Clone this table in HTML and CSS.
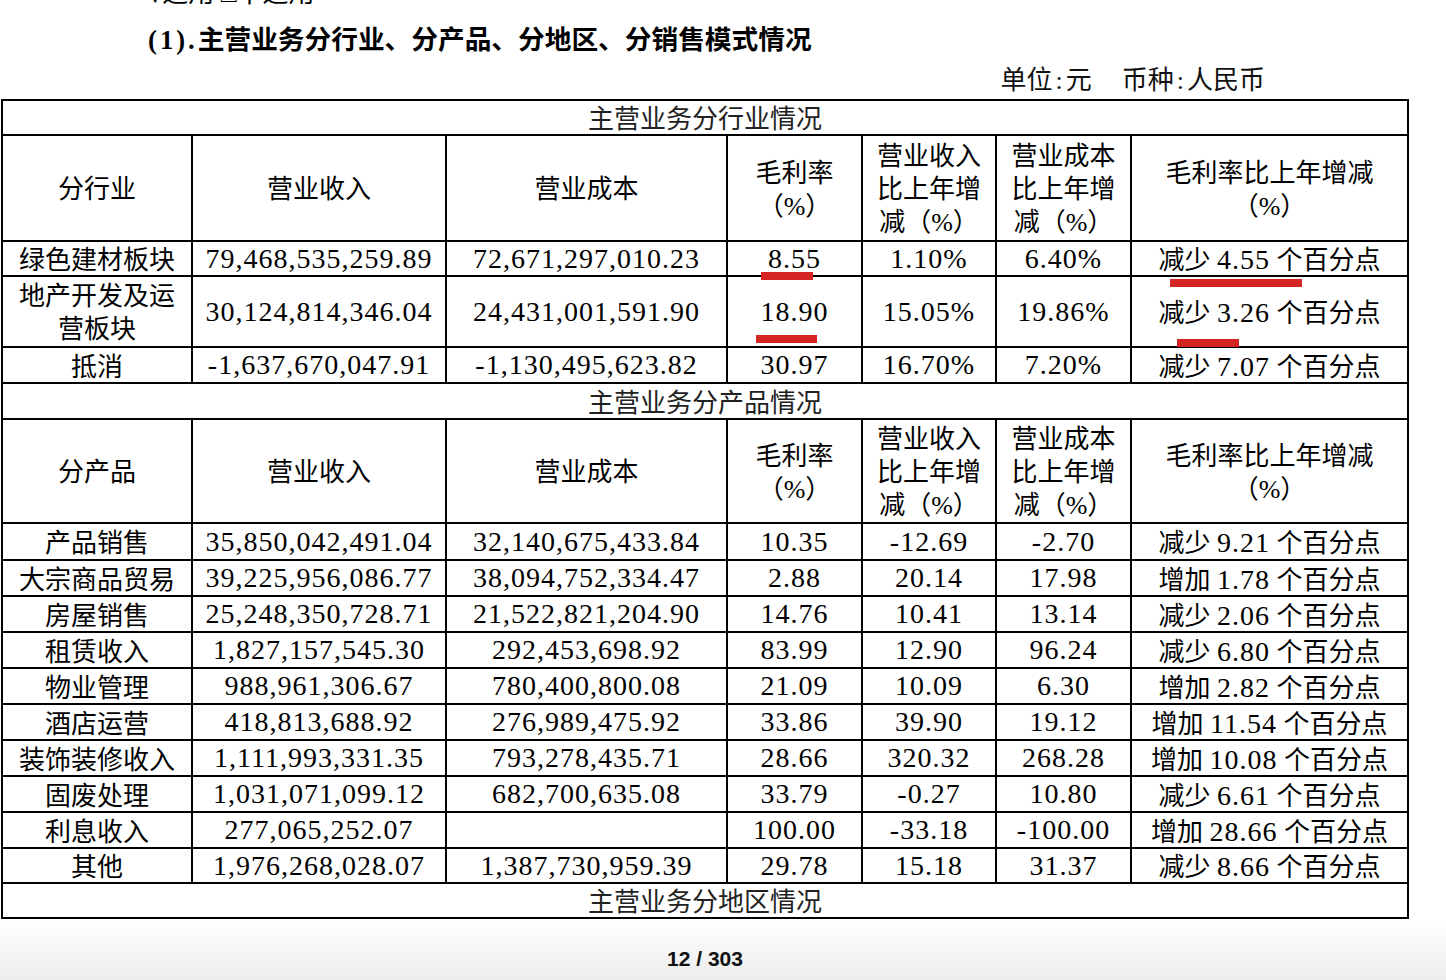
FILE: index.html
```html
<!DOCTYPE html>
<html lang="zh-CN">
<head>
<meta charset="utf-8">
<title>主营业务分行业、分产品、分地区、分销售模式情况</title>
<link rel="stylesheet" href="styles.css">
</head>
<body>
<div class="page">
  <div class="check">√适用 □不适用</div>
  <div class="heading"><span class="hnum">(1).</span>主营业务分行业、分产品、分地区、分销售模式情况</div>
  <div class="unit"><span>单位<span class="colon">:</span>元</span><span class="unit-gap">币种<span class="colon">:</span>人民币</span></div>

  <table class="tbl">
    <colgroup>
      <col class="c1"><col class="c2"><col class="c3"><col class="c4"><col class="c5"><col class="c6"><col class="c7">
    </colgroup>
    <tr class="r-35"><td colspan="7" class="title">主营业务分行业情况</td></tr>
    <tr class="r-h106 head">
      <td>分行业</td><td>营业收入</td><td>营业成本</td>
      <td>毛利率<br>（%）</td>
      <td>营业收入<br>比上年增<br>减（%）</td>
      <td>营业成本<br>比上年增<br>减（%）</td>
      <td>毛利率比上年增减<br>（%）</td>
    </tr>
    <tr class="r-35">
      <td>绿色建材板块</td><td class="num">79,468,535,259.89</td><td class="num">72,671,297,010.23</td>
      <td class="num">8.55</td><td class="num">1.10%</td><td class="num">6.40%</td>
      <td>减少 <span class="num">4.55</span> 个百分点</td>
    </tr>
    <tr class="r-71 head">
      <td>地产开发及运<br>营板块</td><td class="num">30,124,814,346.04</td><td class="num">24,431,001,591.90</td>
      <td class="num">18.90</td><td class="num">15.05%</td><td class="num">19.86%</td>
      <td>减少 <span class="num">3.26</span> 个百分点</td>
    </tr>
    <tr class="r-36">
      <td>抵消</td><td class="num">-1,637,670,047.91</td><td class="num">-1,130,495,623.82</td>
      <td class="num">30.97</td><td class="num">16.70%</td><td class="num">7.20%</td>
      <td>减少 <span class="num">7.07</span> 个百分点</td>
    </tr>
    <tr class="r-36"><td colspan="7" class="title">主营业务分产品情况</td></tr>
    <tr class="r-h104 head">
      <td>分产品</td><td>营业收入</td><td>营业成本</td>
      <td>毛利率<br>（%）</td>
      <td>营业收入<br>比上年增<br>减（%）</td>
      <td>营业成本<br>比上年增<br>减（%）</td>
      <td>毛利率比上年增减<br>（%）</td>
    </tr>
    <tr class="r-37">
      <td>产品销售</td><td class="num">35,850,042,491.04</td><td class="num">32,140,675,433.84</td>
      <td class="num">10.35</td><td class="num">-12.69</td><td class="num">-2.70</td>
      <td>减少 <span class="num">9.21</span> 个百分点</td>
    </tr>
    <tr class="r-36">
      <td>大宗商品贸易</td><td class="num">39,225,956,086.77</td><td class="num">38,094,752,334.47</td>
      <td class="num">2.88</td><td class="num">20.14</td><td class="num">17.98</td>
      <td>增加 <span class="num">1.78</span> 个百分点</td>
    </tr>
    <tr class="r-36">
      <td>房屋销售</td><td class="num">25,248,350,728.71</td><td class="num">21,522,821,204.90</td>
      <td class="num">14.76</td><td class="num">10.41</td><td class="num">13.14</td>
      <td>减少 <span class="num">2.06</span> 个百分点</td>
    </tr>
    <tr class="r-36">
      <td>租赁收入</td><td class="num">1,827,157,545.30</td><td class="num">292,453,698.92</td>
      <td class="num">83.99</td><td class="num">12.90</td><td class="num">96.24</td>
      <td>减少 <span class="num">6.80</span> 个百分点</td>
    </tr>
    <tr class="r-36">
      <td>物业管理</td><td class="num">988,961,306.67</td><td class="num">780,400,800.08</td>
      <td class="num">21.09</td><td class="num">10.09</td><td class="num">6.30</td>
      <td>增加 <span class="num">2.82</span> 个百分点</td>
    </tr>
    <tr class="r-36">
      <td>酒店运营</td><td class="num">418,813,688.92</td><td class="num">276,989,475.92</td>
      <td class="num">33.86</td><td class="num">39.90</td><td class="num">19.12</td>
      <td>增加 <span class="num">11.54</span> 个百分点</td>
    </tr>
    <tr class="r-36">
      <td>装饰装修收入</td><td class="num">1,111,993,331.35</td><td class="num">793,278,435.71</td>
      <td class="num">28.66</td><td class="num">320.32</td><td class="num">268.28</td>
      <td>增加 <span class="num">10.08</span> 个百分点</td>
    </tr>
    <tr class="r-36">
      <td>固废处理</td><td class="num">1,031,071,099.12</td><td class="num">682,700,635.08</td>
      <td class="num">33.79</td><td class="num">-0.27</td><td class="num">10.80</td>
      <td>减少 <span class="num">6.61</span> 个百分点</td>
    </tr>
    <tr class="r-36">
      <td>利息收入</td><td class="num">277,065,252.07</td><td class="num"></td>
      <td class="num">100.00</td><td class="num">-33.18</td><td class="num">-100.00</td>
      <td>增加 <span class="num">28.66</span> 个百分点</td>
    </tr>
    <tr class="r-35">
      <td>其他</td><td class="num">1,976,268,028.07</td><td class="num">1,387,730,959.39</td>
      <td class="num">29.78</td><td class="num">15.18</td><td class="num">31.37</td>
      <td>减少 <span class="num">8.66</span> 个百分点</td>
    </tr>
    <tr class="r-35"><td colspan="7" class="title">主营业务分地区情况</td></tr>
  </table>

  <div class="footer"><span class="pageno">12 / 303</span></div>

  <span class="mark m1"></span>
  <span class="mark m2"></span>
  <span class="mark m3"></span>
  <span class="mark m4"></span>
</div>
</body>
</html>
```

FILE: styles.css
```css
html, body {
  margin: 0;
  padding: 0;
  background: #ffffff;
}

body {
  font-family: "Liberation Serif", "Noto Sans CJK SC", serif;
  color: #000;
}

.page {
  position: relative;
  display: flow-root;
  width: 1446px;
  height: 980px;
  overflow: hidden;
}

.check {
  margin-top: -21px;
  height: 30px;
  line-height: 30px;
  padding-left: 148px;
  font-size: 26px;
}

.heading {
  margin-top: 13px;
  height: 36px;
  line-height: 36px;
  padding-left: 148px;
  font-size: 26.7px;
  font-weight: 700;
}

.hnum {
  letter-spacing: 3px;
}

.unit {
  margin-top: 6px;
  height: 34px;
  line-height: 34px;
  text-align: right;
  padding-right: 181px;
  font-size: 26px;
  color: #111;
}

.colon {
  margin: 0 3px;
}

.unit-gap {
  margin-left: 30px;
}

.tbl {
  border-collapse: collapse;
  table-layout: fixed;
  width: 1408px;
  margin-left: 1px;
  margin-top: 1px;
  font-size: 26px;
}

.c1 { width: 190px; }
.c2 { width: 254px; }
.c3 { width: 281px; }
.c4 { width: 135px; }
.c5 { width: 134px; }
.c6 { width: 135px; }
.c7 { width: 277px; }

.tbl td {
  border: 2px solid #000;
  padding: 4px 0 0;
  text-align: center;
  vertical-align: middle;
  line-height: 29px;
  white-space: nowrap;
  overflow: hidden;
}

.tbl tr.head td {
  padding-top: 3px;
  line-height: 33px;
}

.tbl td.title {
  color: #222;
}

.r-35 { height: 35px; }
.r-36 { height: 36px; }
.r-37 { height: 37px; }
.r-71 { height: 71px; }
.r-h106 { height: 106px; }
.r-h104 { height: 104px; }

.num {
  font-size: 28px;
  letter-spacing: 1px;
}

.tbl td.num,
.tbl tr.head td.num {
  padding-top: 0;
  line-height: 30px;
}

.tbl td span.num {
  line-height: 0;
}

.footer {
  height: 62px;
  padding-top: 28px;
  padding-right: 36px;
  box-sizing: border-box;
  text-align: center;
  background: linear-gradient(to bottom, #ffffff 0%, #f4f4f4 60%, #ececec 100%);
}

.pageno {
  font-family: "Liberation Sans", "Noto Sans", sans-serif;
  font-weight: 700;
  font-size: 21px;
  line-height: 24px;
  color: #111;
}

.mark {
  position: absolute;
  height: 8px;
  background: #d42424;
}

.m1 { left: 761px; top: 272px; width: 52px; }
.m2 { left: 756px; top: 335px; width: 61px; }
.m3 { left: 1170px; top: 279px; width: 132px; }
.m4 { left: 1177px; top: 339px; width: 62px; }
```
